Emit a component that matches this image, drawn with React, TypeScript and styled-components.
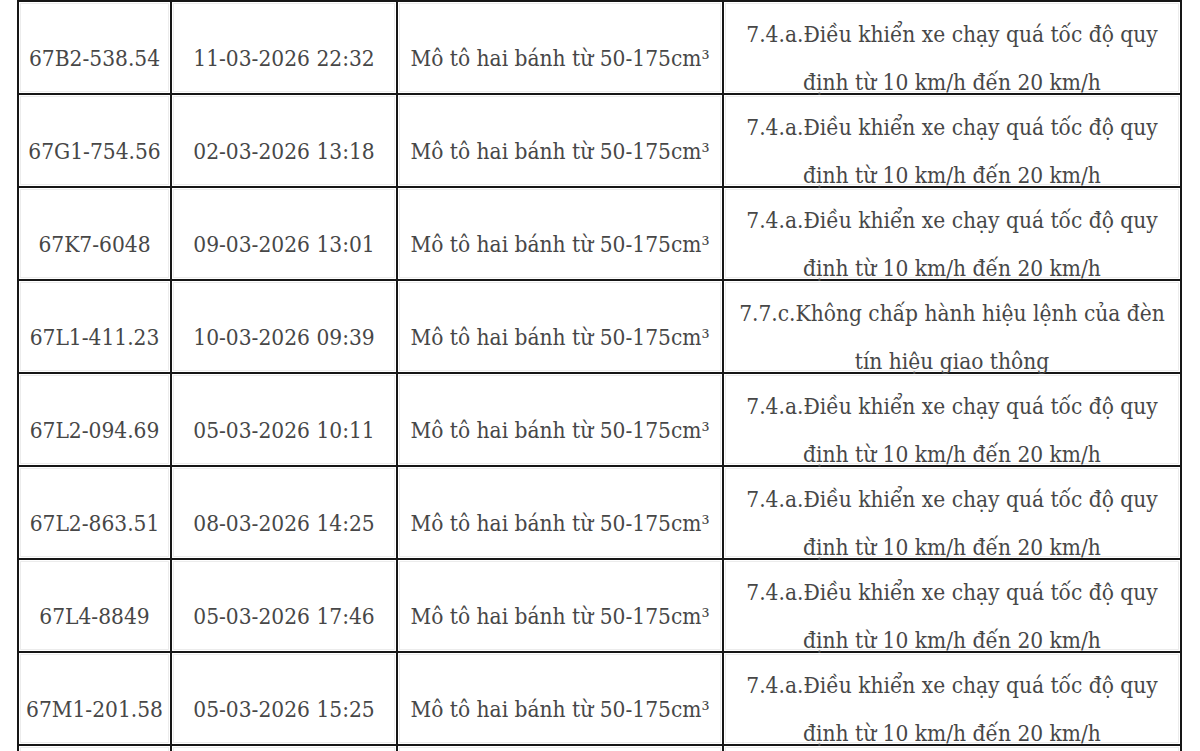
import React from "react";
import styled, { createGlobalStyle } from "styled-components";

const GlobalStyle = createGlobalStyle`
  html, body {
    margin: 0;
    padding: 0;
    background: #ffffff;
  }
  body {
    font-family: "DejaVu Serif", "Liberation Serif", serif;
    overflow: hidden;
  }
`;

const Page = styled.div`
  width: 1200px;
  height: 751px;
  overflow: hidden;
  padding-left: 17px;
  box-sizing: border-box;
`;

const Grid = styled.div`
  display: grid;
  grid-template-columns: 153px 226px 326px 458px;
  grid-auto-rows: 93px;
  width: 1165px;
  box-sizing: border-box;
  border-top: 2px solid #161616;
  border-left: 2px solid #161616;
`;

const Cell = styled.div`
  box-sizing: border-box;
  height: 93px;
  padding: 20px 2px 0;
  border-right: 2px solid #161616;
  border-bottom: 2px solid #161616;
  background: #ffffff;
  box-shadow: inset 0 0 0 1px #ffffff, inset 0 0 0 2px #ececec;
  display: flex;
  flex-direction: column;
  justify-content: center;
  align-items: center;
  text-align: center;
  color: #474747;
  font-size: 22.5px;
  font-stretch: semi-condensed;
  line-height: 48px;
  white-space: nowrap;
`;

const Line = styled.span`
  display: block;
`;

type Row = {
  plate: string;
  time: string;
  vehicle: string;
  violation: [string, string];
};

const SPEED: [string, string] = [
  "7.4.a.Điều khiển xe chạy quá tốc độ quy",
  "định từ 10 km/h đến 20 km/h",
];

const LIGHT: [string, string] = [
  "7.7.c.Không chấp hành hiệu lệnh của đèn",
  "tín hiệu giao thông",
];

const MOTO = "Mô tô hai bánh từ 50-175cm³";

const rows: Row[] = [
  { plate: "67B2-538.54", time: "11-03-2026 22:32", vehicle: MOTO, violation: SPEED },
  { plate: "67G1-754.56", time: "02-03-2026 13:18", vehicle: MOTO, violation: SPEED },
  { plate: "67K7-6048", time: "09-03-2026 13:01", vehicle: MOTO, violation: SPEED },
  { plate: "67L1-411.23", time: "10-03-2026 09:39", vehicle: MOTO, violation: LIGHT },
  { plate: "67L2-094.69", time: "05-03-2026 10:11", vehicle: MOTO, violation: SPEED },
  { plate: "67L2-863.51", time: "08-03-2026 14:25", vehicle: MOTO, violation: SPEED },
  { plate: "67L4-8849", time: "05-03-2026 17:46", vehicle: MOTO, violation: SPEED },
  { plate: "67M1-201.58", time: "05-03-2026 15:25", vehicle: MOTO, violation: SPEED },
  { plate: "", time: "", vehicle: "", violation: ["", ""] },
];

const App: React.FC = () => {
  return (
    <>
      <GlobalStyle />
      <Page>
        <Grid>
          {rows.map((r, i) => (
            <React.Fragment key={i}>
              <Cell>{r.plate}</Cell>
              <Cell>{r.time}</Cell>
              <Cell>{r.vehicle}</Cell>
              <Cell>
                <Line>{r.violation[0]}</Line>
                <Line>{r.violation[1]}</Line>
              </Cell>
            </React.Fragment>
          ))}
        </Grid>
      </Page>
    </>
  );
};

export default App;
